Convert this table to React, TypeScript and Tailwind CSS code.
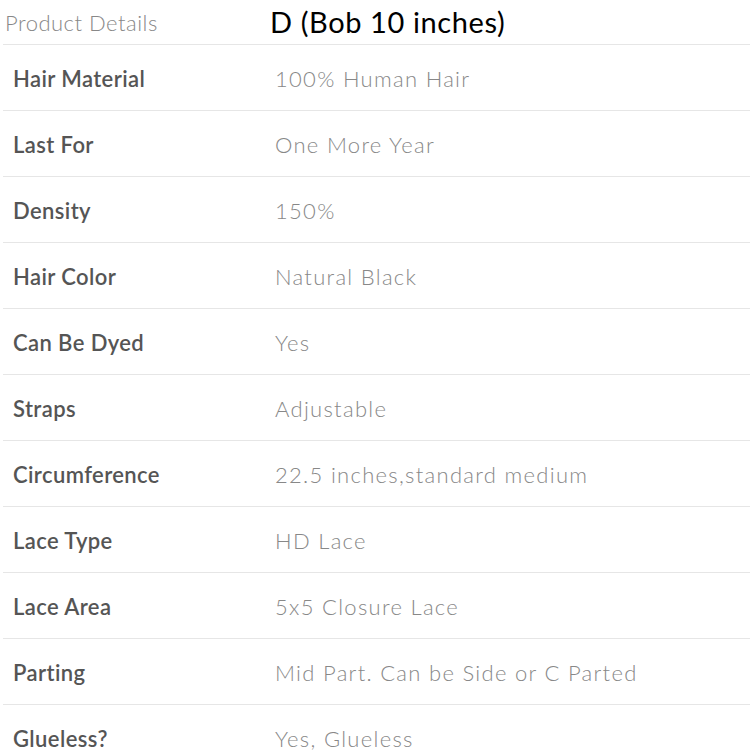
import React from "react";

const rows: [string, string][] = [
  ["Hair Material", "100% Human Hair"],
  ["Last For", "One More Year"],
  ["Density", "150%"],
  ["Hair Color", "Natural Black"],
  ["Can Be Dyed", "Yes"],
  ["Straps", "Adjustable"],
  ["Circumference", "22.5 inches,standard medium"],
  ["Lace Type", "HD Lace"],
  ["Lace Area", "5x5 Closure Lace"],
  ["Parting", "Mid Part. Can be Side or C Parted"],
  ["Glueless?", "Yes, Glueless"],
];

const App = () => {
  return (
    <div className="w-[750px] h-[750px] overflow-hidden bg-white font-['Lato',sans-serif]">
      <div className="flex items-center h-[45px] pl-[5px] border-b border-[#e6e6e6] ml-[3px]">
        <p className="w-[265px] -ml-[3px] text-[22px] text-[#888] font-light tracking-[0.5px]">Product Details</p>
        <p className="text-[29px] text-black tracking-[0.6px]">D (Bob 10 inches)</p>
      </div>
      {rows.map(([k, v]) => (
        <div key={k} className="flex items-center h-[66px] ml-[3px] border-b border-[#e6e6e6]">
          <p className="w-[272px] pl-[10px] pt-[2px] text-[22px] font-semibold text-[#555] tracking-[0.4px]">{k}</p>
          <p className="pt-[2px] text-[22px] text-[#888] font-light tracking-[1.3px]">{v}</p>
        </div>
      ))}
    </div>
  );
};

export default App;
